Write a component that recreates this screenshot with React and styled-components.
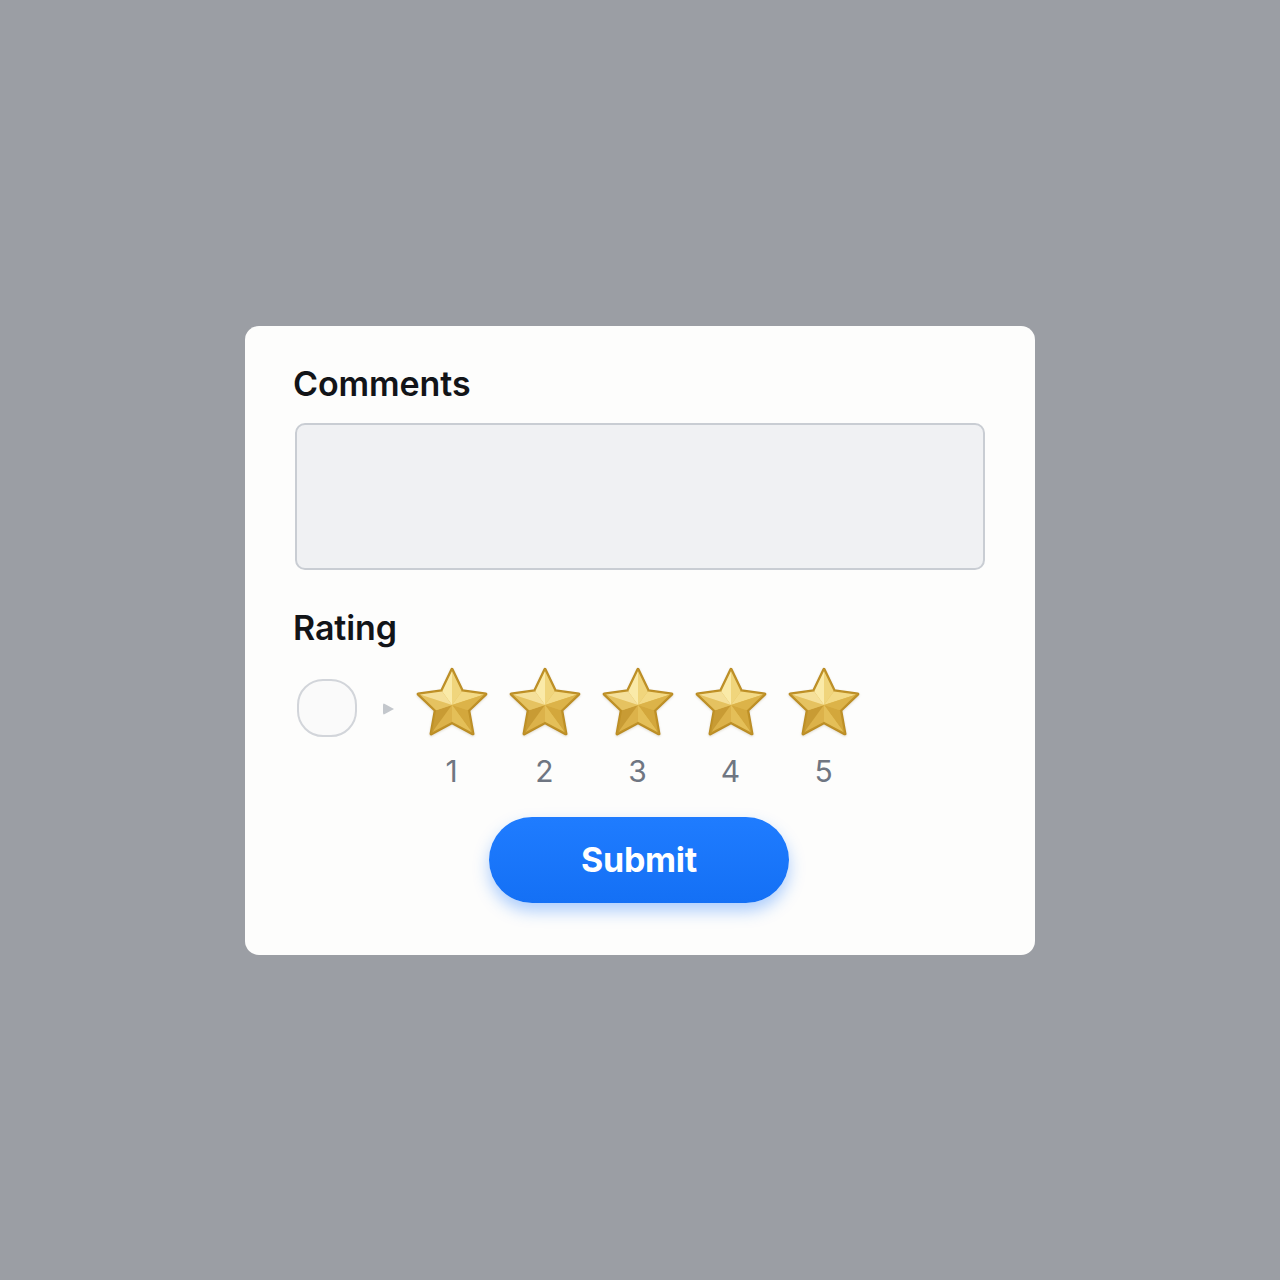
import React, { useState } from 'react';
import styled, { createGlobalStyle } from 'styled-components';

const GlobalStyle = createGlobalStyle`
  html, body {
    margin: 0;
    padding: 0;
    background: #9b9ea4;
    font-family: Inter, "Noto Sans", "Liberation Sans", sans-serif;
  }
`;

const Page = styled.div`
  min-height: 100vh;
  display: flex;
  align-items: center;
  justify-content: center;
`;

const Card = styled.form`
  width: 790px;
  box-sizing: border-box;
  padding: 37px 50px 52px 48px;
  background: #fdfdfc;
  border-radius: 14px;
  display: flex;
  flex-direction: column;
`;

const Label = styled.label`
  display: block;
  font-size: 34px;
  line-height: 41px;
  font-weight: 600;
  letter-spacing: -0.1px;
  color: #121418;
  margin-top: ${p => p.$top || 0}px;
`;

const CommentBox = styled.textarea`
  display: block;
  box-sizing: border-box;
  margin: 19px 0 0 2px;
  width: calc(100% - 2px);
  height: 147px;
  resize: none;
  border: 2px solid #c9cdd3;
  border-radius: 10px;
  background: #f0f1f3;
  font: inherit;
  font-size: 20px;
  padding: 12px 16px;
  outline: none;
`;

const RatingRow = styled.div`
  display: flex;
  align-items: flex-start;
  margin-top: 18px;
`;

const NoneOption = styled.button`
  width: 60px;
  height: 58px;
  margin: 13px 0 0 4px;
  box-sizing: border-box;
  border: 2px solid #d2d5da;
  border-radius: 26px;
  background: #fafafa;
  cursor: pointer;
  padding: 0;
`;

const Pointer = styled.span`
  width: 0;
  height: 0;
  margin: 37px 11px 0 26px;
  border-top: 6px solid transparent;
  border-bottom: 6px solid transparent;
  border-left: 11px solid #c3c7cc;
  border-radius: 2px;
`;

const StarOption = styled.button`
  width: 93px;
  display: flex;
  flex-direction: column;
  align-items: center;
  background: none;
  border: none;
  padding: 0;
  cursor: pointer;
  font-family: inherit;
`;

const StarIcon = styled.svg`
  display: block;
  filter: drop-shadow(0 1px 1px rgba(90, 60, 0, 0.18));
`;

const StarNumber = styled.span`
  margin-top: 15px;
  font-size: 30px;
  line-height: 36px;
  font-weight: 400;
  color: #6f7682;
`;

const SubmitButton = styled.button`
  align-self: center;
  margin-top: 28px;
  width: 300px;
  height: 86px;
  border: none;
  border-radius: 43px;
  background: linear-gradient(180deg, #1f7cff 0%, #1470f5 100%);
  box-shadow: 0 8px 16px rgba(24, 118, 255, 0.35);
  color: #ffffff;
  font-family: inherit;
  font-size: 34px;
  font-weight: 700;
  letter-spacing: -0.3px;
  cursor: pointer;
`;

const CX = 38;
const CY = 39;
const R = 35.5;
const r = 17.5;

const pt = (rad, deg) => {
  const a = (deg * Math.PI) / 180;
  return [CX + rad * Math.cos(a), CY + rad * Math.sin(a)];
};

// two facets per arm, clockwise from the top arm
const facetFills = [
  '#faeaa8', '#f0d57c',
  '#f3da86', '#dcb349',
  '#d3a73c', '#e4bf58',
  '#dcb24a', '#c89b34',
  '#e5c260', '#f5e09a',
];

const Star = () => {
  const facets = [];
  const outline = [];
  for (let i = 0; i < 5; i++) {
    const deg = -90 + i * 72;
    const o = pt(R, deg);
    const left = pt(r, deg - 36);
    const right = pt(r, deg + 36);
    outline.push(o, right);
    facets.push([[CX, CY], left, o]);
    facets.push([[CX, CY], o, right]);
  }
  const toStr = list => list.map(p => p.map(n => n.toFixed(2)).join(',')).join(' ');
  return (
    <StarIcon width="76" height="72" viewBox="0 0 76 72">
      <polygon
        points={toStr(outline)}
        fill="#e2bb52"
        stroke="#b98b22"
        strokeWidth="3.2"
        strokeLinejoin="round"
      />
      {facets.map((f, i) => (
        <polygon key={i} points={toStr(f)} fill={facetFills[i]} />
      ))}
      <polygon
        points={toStr(outline)}
        fill="none"
        stroke="#c09228"
        strokeWidth="1.4"
        strokeLinejoin="round"
      />
    </StarIcon>
  );
};

const App = () => {
  const [rating, setRating] = useState(0);

  return (
    <Page>
      <GlobalStyle />
      <Card onSubmit={e => e.preventDefault()}>
        <Label htmlFor="comments">Comments</Label>
        <CommentBox id="comments" />

        <Label $top={37}>Rating</Label>
        <RatingRow>
          <NoneOption type="button" aria-label="No rating" onClick={() => setRating(0)} />
          <Pointer />
          {[1, 2, 3, 4, 5].map(n => (
            <StarOption key={n} type="button" onClick={() => setRating(n)} aria-pressed={rating === n}>
              <Star />
              <StarNumber>{n}</StarNumber>
            </StarOption>
          ))}
        </RatingRow>

        <SubmitButton type="submit">Submit</SubmitButton>
      </Card>
    </Page>
  );
};

export default App;
